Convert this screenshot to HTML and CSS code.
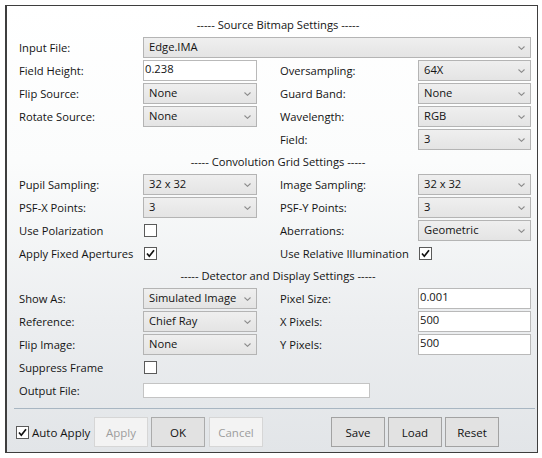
FILE: index.html
```html
<!DOCTYPE html>
<html>
<head>
<meta charset="utf-8">
<link rel="stylesheet" href="styles.css">
</head>
<body>
<div class="frame">
  <div class="title">----- Source Bitmap Settings -----</div>
  <div class="grid">
    <div class="lbl">Input File:</div>
    <div class="sel span4"><span>Edge.IMA</span><svg class="chev" width="7" height="4" viewBox="0 0 7 4"><polyline points="0.5,0.5 3.5,3.3 6.5,0.5"/></svg></div>

    <div class="lbl">Field Height:</div>
    <div class="inp">0.238</div>
    <div></div>
    <div class="lbl">Oversampling:</div>
    <div class="sel"><span>64X</span><svg class="chev" width="7" height="4" viewBox="0 0 7 4"><polyline points="0.5,0.5 3.5,3.3 6.5,0.5"/></svg></div>

    <div class="lbl">Flip Source:</div>
    <div class="sel"><span>None</span><svg class="chev" width="7" height="4" viewBox="0 0 7 4"><polyline points="0.5,0.5 3.5,3.3 6.5,0.5"/></svg></div>
    <div></div>
    <div class="lbl">Guard Band:</div>
    <div class="sel"><span>None</span><svg class="chev" width="7" height="4" viewBox="0 0 7 4"><polyline points="0.5,0.5 3.5,3.3 6.5,0.5"/></svg></div>

    <div class="lbl">Rotate Source:</div>
    <div class="sel"><span>None</span><svg class="chev" width="7" height="4" viewBox="0 0 7 4"><polyline points="0.5,0.5 3.5,3.3 6.5,0.5"/></svg></div>
    <div></div>
    <div class="lbl">Wavelength:</div>
    <div class="sel"><span>RGB</span><svg class="chev" width="7" height="4" viewBox="0 0 7 4"><polyline points="0.5,0.5 3.5,3.3 6.5,0.5"/></svg></div>

    <div class="lbl col4">Field:</div>
    <div class="sel"><span>3</span><svg class="chev" width="7" height="4" viewBox="0 0 7 4"><polyline points="0.5,0.5 3.5,3.3 6.5,0.5"/></svg></div>
  </div>

  <div class="title">----- Convolution Grid Settings -----</div>
  <div class="grid">
    <div class="lbl">Pupil Sampling:</div>
    <div class="sel"><span>32 x 32</span><svg class="chev" width="7" height="4" viewBox="0 0 7 4"><polyline points="0.5,0.5 3.5,3.3 6.5,0.5"/></svg></div>
    <div></div>
    <div class="lbl">Image Sampling:</div>
    <div class="sel"><span>32 x 32</span><svg class="chev" width="7" height="4" viewBox="0 0 7 4"><polyline points="0.5,0.5 3.5,3.3 6.5,0.5"/></svg></div>

    <div class="lbl">PSF-X Points:</div>
    <div class="sel"><span>3</span><svg class="chev" width="7" height="4" viewBox="0 0 7 4"><polyline points="0.5,0.5 3.5,3.3 6.5,0.5"/></svg></div>
    <div></div>
    <div class="lbl">PSF-Y Points:</div>
    <div class="sel"><span>3</span><svg class="chev" width="7" height="4" viewBox="0 0 7 4"><polyline points="0.5,0.5 3.5,3.3 6.5,0.5"/></svg></div>

    <div class="lbl">Use Polarization</div>
    <div class="cbcell"><span class="cb"></span></div>
    <div></div>
    <div class="lbl">Aberrations:</div>
    <div class="sel"><span>Geometric</span><svg class="chev" width="7" height="4" viewBox="0 0 7 4"><polyline points="0.5,0.5 3.5,3.3 6.5,0.5"/></svg></div>

    <div class="lbl">Apply Fixed Apertures</div>
    <div class="cbcell"><span class="cb"><svg class="tick" width="11" height="11" viewBox="0 0 11 11"><polyline points="2,5.5 4.3,8.2 9,2.2"/></svg></span></div>
    <div></div>
    <div class="lbl">Use Relative Illumination</div>
    <div class="cbcell"><span class="cb"><svg class="tick" width="11" height="11" viewBox="0 0 11 11"><polyline points="2,5.5 4.3,8.2 9,2.2"/></svg></span></div>
  </div>

  <div class="title">----- Detector and Display Settings -----</div>
  <div class="grid">
    <div class="lbl">Show As:</div>
    <div class="sel"><span>Simulated Image</span><svg class="chev" width="7" height="4" viewBox="0 0 7 4"><polyline points="0.5,0.5 3.5,3.3 6.5,0.5"/></svg></div>
    <div></div>
    <div class="lbl">Pixel Size:</div>
    <div class="inp">0.001</div>

    <div class="lbl">Reference:</div>
    <div class="sel"><span>Chief Ray</span><svg class="chev" width="7" height="4" viewBox="0 0 7 4"><polyline points="0.5,0.5 3.5,3.3 6.5,0.5"/></svg></div>
    <div></div>
    <div class="lbl">X Pixels:</div>
    <div class="inp">500</div>

    <div class="lbl">Flip Image:</div>
    <div class="sel"><span>None</span><svg class="chev" width="7" height="4" viewBox="0 0 7 4"><polyline points="0.5,0.5 3.5,3.3 6.5,0.5"/></svg></div>
    <div></div>
    <div class="lbl">Y Pixels:</div>
    <div class="inp">500</div>

    <div class="lbl">Suppress Frame</div>
    <div class="cbcell span4"><span class="cb"></span></div>

    <div class="lbl">Output File:</div>
    <div class="outcell span4"><div class="inp out"></div></div>
  </div>

  <div class="sep"></div>

  <div class="buttons">
    <div class="auto"><span class="cb"><svg class="tick" width="11" height="11" viewBox="0 0 11 11"><polyline points="2,5.5 4.3,8.2 9,2.2"/></svg></span><span class="autotxt">Auto Apply</span></div>
    <div class="btn dis">Apply</div>
    <div class="btn ok">OK</div>
    <div class="btn dis">Cancel</div>
    <div class="right">
      <div class="btn norm">Save</div>
      <div class="btn norm">Load</div>
      <div class="btn norm">Reset</div>
    </div>
  </div>
</div>
</body>
</html>
```

FILE: styles.css
```css
html, body {
  margin: 0;
  padding: 0;
  background: #ffffff;
}
body {
  font-family: "Open Sans", "Noto Sans", sans-serif;
  font-size: 11.2px;
  color: #141414;
}
.frame {
  margin: 5px 0 0 5px;
  width: 514px;
  height: 434px;
  padding: 8px 4px 4px 12px;
  border: 1px solid #3e3e3e;
  border-left-width: 2px;
  background: linear-gradient(to bottom, #ffffff 0%, #fbfcfc 35%, #eceef0 70%, #e2e5e8 100%);
}
.title {
  height: 22px;
  line-height: 22px;
  text-align: center;
  padding-left: 4px;
}
.grid {
  display: grid;
  grid-template-columns: 124px 114px 23px 138px 113px;
  grid-auto-rows: 23px;
}
.lbl {
  display: flex;
  align-items: center;
  white-space: nowrap;
}
.col4 {
  grid-column: 4;
}
.span4 {
  grid-column: 2 / span 4;
}
.sel {
  margin: 1px 0;
  box-sizing: border-box;
  height: 21px;
  border: 1px solid #b4b4b4;
  background: linear-gradient(to bottom, #efefef, #e4e4e4);
  display: flex;
  align-items: center;
  justify-content: space-between;
  padding: 0 5px 1px 5px;
  line-height: 14px;
}
.chev {
  display: block;
  fill: none;
  stroke: #8c8c8c;
  stroke-width: 1.1;
  margin-top: 1px;
}
.inp {
  margin: 1px 0;
  box-sizing: border-box;
  height: 21px;
  border: 1px solid #b9b9b9;
  background: #ffffff;
  padding: 1px 0 0 1px;
  line-height: 14px;
}
.outcell {
  display: flex;
  align-items: center;
}
.inp.out {
  width: 227px;
  height: 15px;
  margin: 0;
  border-color: #c4c4c4;
}
.cbcell {
  display: flex;
  align-items: center;
  padding-left: 1px;
}
.cb {
  box-sizing: border-box;
  width: 13px;
  height: 13px;
  border: 1px solid #5a5a5a;
  background: #ffffff;
  display: flex;
  align-items: center;
  justify-content: center;
}
.tick {
  display: block;
  fill: none;
  stroke: #111111;
  stroke-width: 1.7;
}
.sep {
  margin: 6px -2px 0 -5px;
  height: 1px;
  background: #a8b6c2;
}
.buttons {
  margin-top: 8px;
  height: 30px;
  display: flex;
  align-items: stretch;
}
.auto {
  display: flex;
  align-items: center;
  margin-left: -3px;
  width: 78px;
}
.autotxt {
  margin-left: 3px;
  font-size: 11.5px;
}
.btn {
  box-sizing: border-box;
  width: 54px;
  height: 30px;
  display: flex;
  align-items: center;
  justify-content: center;
  margin-right: 3px;
  font-size: 11.5px;
}
.btn.dis {
  background: #f3f3f3;
  border: 1px solid #d6d6d6;
  color: #9d9d9d;
}
.btn.ok {
  background: #e2e2e2;
  border: 1px solid #ababab;
  color: #111;
  margin-right: 4px;
}
.btn.norm {
  background: #e2e2e2;
  border: 1px solid #a2a2a2;
  color: #111;
}
.right {
  margin-left: auto;
  margin-right: 31px;
  display: flex;
}
.right .btn {
  margin-right: 3px;
}
```
